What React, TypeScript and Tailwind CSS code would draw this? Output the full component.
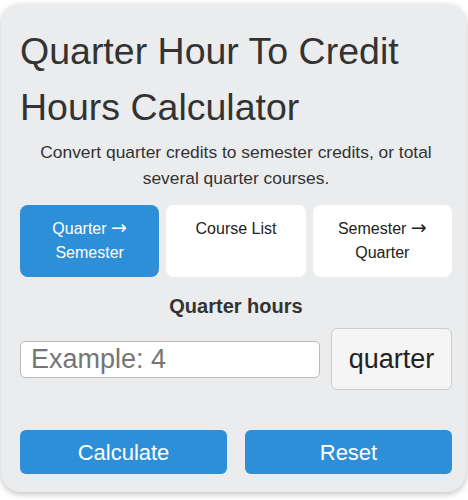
import { useState } from "react";

const tabs = [
  { id: "q2s", from: "Quarter", to: "Semester" },
  { id: "list", from: "Course List", to: "" },
  { id: "s2q", from: "Semester", to: "Quarter" },
];

export default function App() {
  const [active, setActive] = useState("q2s");
  const [value, setValue] = useState("");

  return (
    <div className="w-[468px] h-[500px] bg-white pt-[4px] pl-[1px] font-['Liberation_Sans',Arial,sans-serif]">
      <div className="w-[465px] h-[488px] rounded-[20px] bg-[#ebeced] shadow-[0_2px_6px_rgba(0,0,0,0.25)] pl-[19px] pr-[14px] pt-[19px] flex flex-col">
        <h1 className="text-[37.5px] leading-[56px] text-[#333] font-normal">
          Quarter Hour To Credit Hours Calculator
        </h1>
        <p className="mt-[4px] text-[17.4px] leading-[26px] text-[#333] text-center">
          Convert quarter credits to semester credits, or total several quarter courses.
        </p>

        <div className="mt-[14px] grid grid-cols-3 gap-[7px]">
          {tabs.map((t) => (
            <button
              key={t.id}
              onClick={() => setActive(t.id)}
              className={
                active === t.id
                  ? "h-[72px] rounded-[8px] bg-[#2d8fd8] text-white text-[16px] leading-[24px] px-4 pt-[12px] flex items-start justify-center"
                  : "h-[72px] rounded-[8px] bg-white text-[#222] text-[16px] leading-[24px] px-4 pt-[12px] flex items-start justify-center"
              }
            >
              <span className="block text-center">
                {t.to ? (
                  <>
                    {t.from}{" "}
                    <span className="font-['DejaVu_Sans',sans-serif] text-[19px] leading-[20px]">→</span>{" "}
                    {t.to}
                  </>
                ) : (
                  t.from
                )}
              </span>
            </button>
          ))}
        </div>

        <label className="mt-[16px] text-center text-[20px] leading-[27px] font-bold text-[#333]">
          Quarter hours
        </label>

        <div className="mt-[8px] flex items-center gap-[11px]">
          <input
            value={value}
            onChange={(e) => setValue(e.target.value)}
            placeholder="Example: 4"
            className="flex-1 min-w-0 h-[37px] rounded-[5px] border border-[#bbb] bg-white px-[10px] text-[27px] text-[#333] placeholder:text-[#757575] outline-none"
          />
          <div className="w-[121px] h-[62px] rounded-[6px] border border-[#ccc] bg-[#f5f5f5] flex items-center justify-center text-[27px] text-[#222]">
            quarter
          </div>
        </div>

        <div className="mt-[40px] grid grid-cols-2 gap-[18px]">
          <button className="h-[44px] rounded-[6px] bg-[#2d8fd8] text-white text-[22px]">
            Calculate
          </button>
          <button
            onClick={() => setValue("")}
            className="h-[44px] rounded-[6px] bg-[#2d8fd8] text-white text-[22px]"
          >
            Reset
          </button>
        </div>
      </div>
    </div>
  );
}
